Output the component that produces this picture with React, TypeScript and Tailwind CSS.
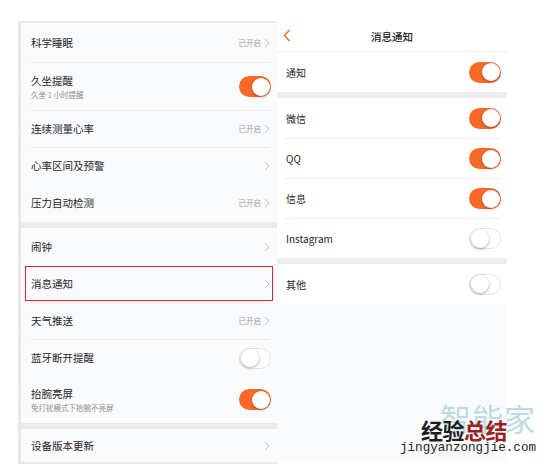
import React from 'react';

const font = { fontFamily: '"Noto Sans CJK SC", "Noto Sans", sans-serif' };

const Toggle: React.FC<{ on: boolean }> = ({ on }) => (
  <div
    className={`relative w-[32px] h-[21px] rounded-full flex items-center ${
      on ? 'bg-[#f96a28] justify-end' : 'bg-white border border-[#e3e3e3] justify-start'
    }`}
  >
    <div className={`w-[18px] h-[18px] rounded-full bg-white shadow-[0_1px_3px_rgba(0,0,0,0.35)] ${on ? 'mr-[1.5px]' : 'ml-[0.5px]'}`} />
  </div>
);

const Chevron: React.FC = () => (
  <svg width="6" height="10" viewBox="0 0 6 10" className="ml-[3px]">
    <polyline points="1,1 5,5 1,9" fill="none" stroke="#c4c4c4" strokeWidth="1" />
  </svg>
);

type LeftRow = {
  title: string;
  sub?: string;
  status?: string;
  toggle?: boolean;
  h: string;
  divider?: boolean;
  boxed?: boolean;
};

const sectionA: LeftRow[] = [
  { title: '科学睡眠', status: '已开启', h: 'h-[39px]' },
  { title: '久坐提醒', sub: '久坐 1 小时提醒', toggle: true, h: 'h-[48px]', divider: true },
  { title: '连续测量心率', status: '已开启', h: 'h-[37px]', divider: true },
  { title: '心率区间及预警', h: 'h-[37px]', divider: true },
  { title: '压力自动检测', status: '已开启', h: 'h-[38px]' },
];

const sectionB: LeftRow[] = [
  { title: '闹钟', h: 'h-[37px]' },
  { title: '消息通知', h: 'h-[37px]', boxed: true },
  { title: '天气推送', status: '已开启', h: 'h-[37px]', divider: true },
  { title: '蓝牙断开提醒', toggle: false, h: 'h-[37px]', divider: true },
  { title: '抬腕亮屏', sub: '免打扰模式下抬腕不亮屏', toggle: true, h: 'h-[47px]' },
];

const LeftItem: React.FC<{ row: LeftRow }> = ({ row }) => {
  const right =
    row.toggle !== undefined ? (
      <Toggle on={row.toggle} />
    ) : (
      <div className="flex items-center mr-[1px]">
        {row.status && <span className="text-[7.5px] text-[#9a9a9a]">{row.status}</span>}
        <Chevron />
      </div>
    );
  const body = (
    <div className="flex-1 flex items-center justify-between">
      <div className="flex flex-col">
        <span className="text-[10.5px] leading-[14px] text-[#262626]">{row.title}</span>
        {row.sub && <span className="text-[7.5px] leading-[11px] text-[#8d8d8d] mt-[1px]">{row.sub}</span>}
      </div>
      {right}
    </div>
  );
  return (
    <div className={`${row.h} flex flex-col`}>
      {row.divider && <div className="h-px bg-[#ececec] ml-[10px] mr-[7px]" />}
      {row.boxed ? (
        <div className="flex-1 flex mx-[4px] my-[1px] border-[1.5px] border-[#e3262b] pl-[5px] pr-[1px]">{body}</div>
      ) : (
        <div className="flex-1 flex pl-[10px] pr-[6px]">{body}</div>
      )}
    </div>
  );
};

const RightItem: React.FC<{ label: string; on: boolean; divider?: boolean }> = ({ label, on, divider }) => (
  <div className="bg-white h-[40px] flex flex-col">
    {divider && <div className="h-px bg-[#efefef] ml-[8px] mr-[7px]" />}
    <div className="flex-1 flex items-center justify-between pl-[9px] pr-[6px]">
      <span className="text-[10px] text-[#262626]">{label}</span>
      <Toggle on={on} />
    </div>
  </div>
);

export default function App() {
  return (
    <div className="relative w-[550px] h-[466px] bg-white overflow-hidden" style={font}>
      <div className="flex items-start pt-[21px] pl-[18px]">
        <div className="w-[259px] h-[443px] bg-[#fafbfc] border-l-[3px] border-t-2 border-b-2 border-[#e8e8e8] flex flex-col">
          {sectionA.map((r) => (
            <LeftItem key={r.title} row={r} />
          ))}
          <div className="h-[6px] bg-[#ececec]" />
          {sectionB.map((r) => (
            <LeftItem key={r.title} row={r} />
          ))}
          <div className="h-[6px] bg-[#ececec]" />
          <LeftItem row={{ title: '设备版本更新', h: 'h-[33px]' }} />
        </div>

        <div className="w-[230px] h-[439px] bg-[#fafbfc] flex flex-col mt-[1px]">
          <div className="h-[30px] bg-white border-b border-[#efefef] relative flex items-center justify-center">
            <svg width="8" height="13" viewBox="0 0 8 13" className="absolute left-[6px] top-[7px]">
              <polyline points="6.5,1 1.5,6.5 6.5,12" fill="none" stroke="#f96a28" strokeWidth="1.4" />
            </svg>
            <span className="text-[10.5px] font-medium text-[#222]">消息通知</span>
          </div>
          <RightItem label="通知" on />
          <div className="h-[6px] bg-[#eeeeee]" />
          <RightItem label="微信" on />
          <RightItem label="QQ" on divider />
          <RightItem label="信息" on divider />
          <RightItem label="Instagram" on={false} divider />
          <div className="h-[6px] bg-[#eeeeee]" />
          <RightItem label="其他" on={false} />
        </div>
      </div>

      <div className="absolute left-[440px] top-[400px] text-[31px] leading-[36px] text-[#bcdde0] tracking-[1px]">智能家</div>
      <div className="absolute left-[421px] top-[415px] text-[22px] leading-[28px] font-bold tracking-[-0.5px]">
        <span className="text-[#1e1e1e]">经验</span>
        <span className="text-[#9c1f1f]">总结</span>
      </div>
      <div
        className="absolute left-[400px] top-[441px] text-[12.6px] leading-[14px] text-[#1e1e1e]"
        style={{ fontFamily: '"Liberation Mono", monospace' }}
      >
        jingyanzongjie.com
      </div>
    </div>
  );
}
